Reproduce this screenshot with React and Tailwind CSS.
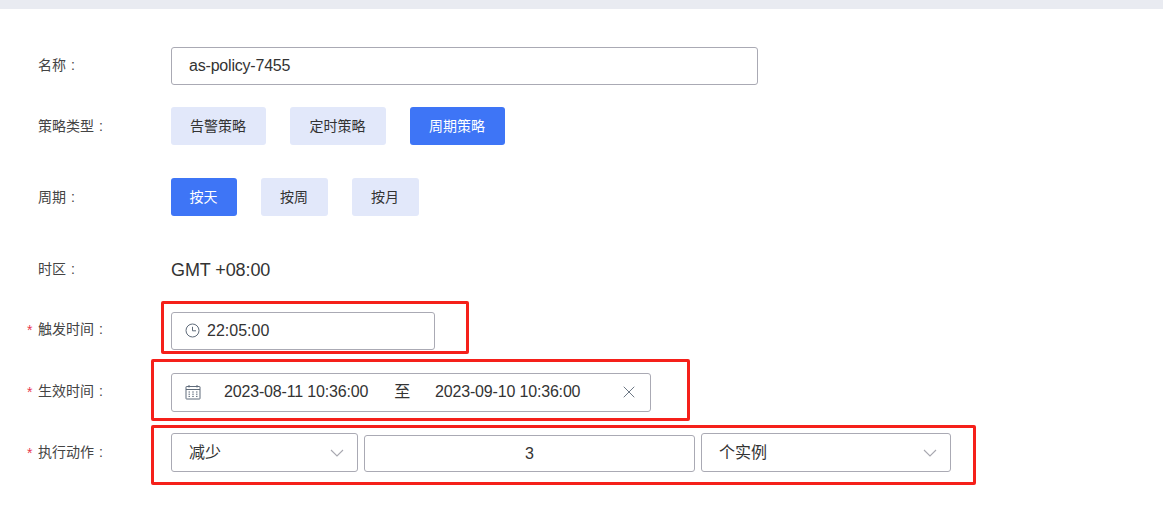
import { X } from 'lucide-react';

const font = { fontFamily: '"Liberation Sans", "Noto Sans CJK SC", sans-serif' };

function Label({ text, required, className }) {
  return (
    <div className={`relative w-[133px] shrink-0 text-sm text-[#444] ${className}`}>
      {required && <span className="absolute left-[-11px] top-[1px] text-[#e8384f]">*</span>}
      {text}
      <span className="ml-[5px]">:</span>
    </div>
  );
}

function Row({ label, required, labelClass, className, children }) {
  return (
    <div className={`flex items-center ${className}`}>
      <Label text={label} required={required} className={labelClass} />
      {children}
    </div>
  );
}

function OptionButton({ active, className, children }) {
  return (
    <button className={`h-[38px] rounded-[3px] pr-px text-sm ${active ? 'bg-[#3e75f6] text-white' : 'bg-[#e2e8fa] text-[#333]'} ${className}`}>
      {children}
    </button>
  );
}

function Chevron() {
  return (
    <svg width="14" height="8" viewBox="0 0 14 8" fill="none" stroke="#a8a8b0" strokeWidth="1.1">
      <path d="M1 1L7 7L13 1" />
    </svg>
  );
}

function Select({ value, className }) {
  return (
    <div className={`flex h-[39px] items-center justify-between rounded-[3px] border border-[#aaaab4] pl-[17px] pr-[13px] text-base text-[#333] ${className}`}>
      <span>{value}</span>
      <Chevron />
    </div>
  );
}

function ClockIcon() {
  return (
    <svg width="15" height="15" viewBox="0 0 15 15" fill="none" stroke="#5f6b7a" strokeWidth="1" className="-translate-y-px">
      <circle cx="7.5" cy="7.5" r="6.5" />
      <path d="M7.5 3.8V7.8H11" />
    </svg>
  );
}

function CalendarIcon() {
  return (
    <svg width="16" height="16" viewBox="0 0 16 16" fill="none" stroke="#5f6b7a" strokeWidth="1">
      <rect x="1" y="2.5" width="14" height="12.5" rx="0.5" />
      <path d="M1 5.5H15M4 1V3.5M12 1V3.5" />
      <path d="M3.5 8H5M7.2 8H8.8M11 8H12.5M3.5 10.2H5M7.2 10.2H8.8M11 10.2H12.5M3.5 12.4H5M7.2 12.4H8.8M11 12.4H12.5" />
    </svg>
  );
}

export default function App() {
  return (
    <div className="relative min-h-[521px] bg-white" style={font}>
      <div className="h-[9px] bg-[#e9ebf1]"></div>

      <form className="pl-[38px] pt-[38px]">
        <Row label="名称" labelClass="pb-[2px]">
          <div className="flex h-[38px] w-[587px] items-center rounded-[3px] border border-[#aaaab4] pl-[17px] text-base tracking-[-0.2px] text-[#333]">
            as-policy-7455
          </div>
        </Row>

        <Row label="策略类型" className="mt-[22px]">
          <div className="flex gap-6">
            <OptionButton className="w-[95px]">告警策略</OptionButton>
            <OptionButton className="w-[96px]">定时策略</OptionButton>
            <OptionButton active className="w-[95px]">周期策略</OptionButton>
          </div>
        </Row>

        <Row label="周期" className="mt-[33px]">
          <div className="flex gap-6">
            <OptionButton active className="w-[66px]">按天</OptionButton>
            <OptionButton className="w-[67px]">按周</OptionButton>
            <OptionButton className="w-[67px]">按月</OptionButton>
          </div>
        </Row>

        <Row label="时区" labelClass="pb-[2px]" className="mt-[35px] h-[38px]">
          <span className="text-lg tracking-[-0.1px] text-[#333]">GMT +08:00</span>
        </Row>

        <Row label="触发时间" required labelClass="pb-[4px]" className="mt-[23px]">
          <div className="flex h-[38px] w-[264px] items-center rounded-[3px] border border-[#aaaab4] pl-[13px] text-base text-[#333]">
            <ClockIcon />
            <span className="ml-[7px]">22:05:00</span>
          </div>
        </Row>

        <Row label="生效时间" required labelClass="pb-[4px]" className="mt-[23px]">
          <div className="flex h-[39px] w-[480px] items-center rounded-[3px] border border-[#aaaab4] pb-[2px] pl-[13px] text-base tracking-[-0.17px] text-[#333]">
            <CalendarIcon />
            <span className="ml-[23px]">2023-08-11 10:36:00</span>
            <span className="ml-[26px]">至</span>
            <span className="ml-[25px]">2023-09-10 10:36:00</span>
            <X size={20} strokeWidth={1.1} className="ml-[39px] text-[#5f6b7a]" />
          </div>
        </Row>

        <Row label="执行动作" required labelClass="pb-[2px]" className="mt-[21px]">
          <div className="flex items-end gap-[6px]">
            <Select value="减少" className="w-[187px]" />
            <div className="flex h-[37px] w-[331px] items-center justify-center rounded-[3px] border border-[#aaaab4] text-base text-[#333]">
              3
            </div>
            <Select value="个实例" className="w-[250px]" />
          </div>
        </Row>
      </form>

      {/* red annotation frames over the form */}
      <div className="absolute left-[161px] top-[301px] h-[53px] w-[308px] rounded-[2px] border-[3px] border-[#f5201a]"></div>
      <div className="absolute left-[151px] top-[359px] h-[62px] w-[539px] rounded-[2px] border-[3px] border-[#f5201a]"></div>
      <div className="absolute left-[151px] top-[425px] h-[60px] w-[825px] rounded-[2px] border-[3px] border-[#f5201a]"></div>
    </div>
  );
}
